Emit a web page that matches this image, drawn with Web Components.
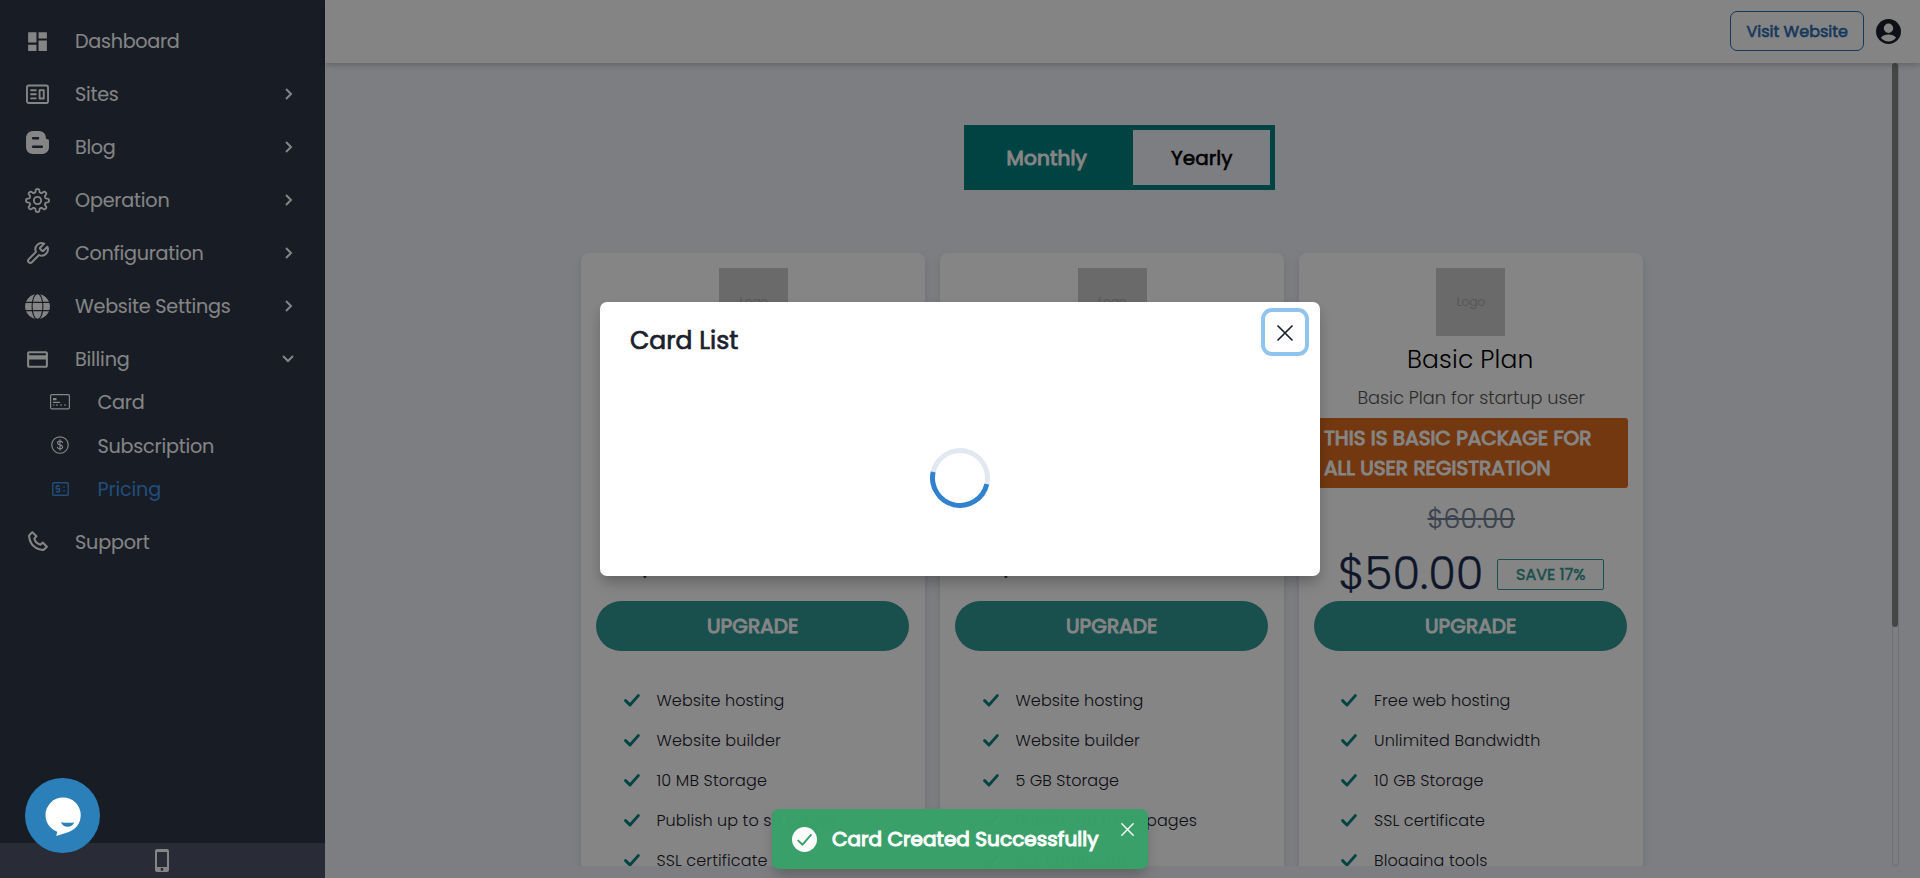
<!DOCTYPE html>
<html lang="en">
<head>
<meta charset="utf-8">
<title>Pricing</title>
<style>
html,body{margin:0;height:100%;overflow:hidden}
body{font-family:Poppins,Inter,"Open Sans",sans-serif;color:#1a202c}
</style>
</head>
<body>
<admin-app></admin-app>
<script>
// Eight-lobed gear outline, sampled around the circle
const gear = (() => {
  const p = [];
  for (let i = 0; i < 160; i++) {
    const t = i / 160 * Math.PI * 2, r = 9.45 + 1.55 * Math.tanh(2 * Math.cos(8 * t)) / Math.tanh(2);
    p.push((12 + r * Math.sin(t)).toFixed(2) + ' ' + (12 - r * Math.cos(t)).toFixed(2));
  }
  return 'M' + p.join('L') + 'Z';
})();
const S = 'fill="none" stroke="currentColor" stroke-linecap="round" stroke-linejoin="round"';
const ICONS = {
  dashboard: ['0 0 24 24', '<path fill="currentColor" d="M3 13h8V3H3v10zm0 8h8v-6H3v6zm10 0h8V11h-8v10zm0-18v6h8V3h-8z"/>'],
  sites: ['0 0 24 24', `<g ${S} stroke-width="1.8"><rect x="1.9" y="3.4" width="20.2" height="16.8" rx="1.8"/><path d="M5.8 7.900h4.6M5.8 11.800h4.6M5.8 15.700h4.6M14 7.800h4v8h-4z"/></g>`],
  blog: ['0 0 24 24', '<path fill="currentColor" fill-rule="evenodd" d="M7.6 1h5.8C17.2 1 20 3.800 20 7.200c0 1 .6 1.700 1.600 1.700 1 0 1.400.6 1.400 1.500v6.200C23 20.300 20.200 23 16.600 23H7.400C3.800 23 1 20.200 1 16.600V7.600C1 3.900 3.900 1 7.600 1zm.2 5.700a1.200 1.200 0 0 0 0 2.400h4.700a1.200 1.200 0 0 0 0-2.400zm0 8.100a1.200 1.200 0 0 0 0 2.400h8.300a1.200 1.200 0 0 0 0-2.400z"/>'],
  gear: ['0 0 24 24', `<g ${S} stroke-width="1.8"><path d="${gear}"/><circle cx="12" cy="12" r="3.5"/></g>`],
  wrench: ['0 0 24 24', `<path ${S} stroke-width="1.9" d="M14.700 6.300a1 1 0 0 0 0 1.400l1.600 1.600a1 1 0 0 0 1.400 0l3.770-3.770a6 6 0 0 1-7.940 7.940l-6.910 6.910a2.120 2.120 0 0 1-3-3l6.910-6.910a6 6 0 0 1 7.940-7.940z"/>`],
  globe: ['0 0 24 24', '<circle cx="12" cy="12" r="11.9" fill="currentColor"/><g fill="none" stroke="#2d3748" stroke-width="1.100"><ellipse cx="12" cy="12" rx="5.200" ry="12.400"/><path d="M0 8h24M0 16h24"/></g>'],
  billing: ['0 0 24 24', '<path fill="currentColor" d="M20 4H4c-1.110 0-1.990.890-1.990 2L2 18c0 1.110.890 2 2 2h16c1.110 0 2-.890 2-2V6c0-1.110-.890-2-2-2zm0 14H4v-6h16v6zm0-10H4V6h16v2z"/>'],
  card: ['0 0 20 16', '<rect x=".6" y=".6" width="18.800" height="14.300" rx="1.200" fill="none" stroke="currentColor" stroke-width="1.200"/><path fill="currentColor" d="M3 4h3.500v2.200H3zM3 7.800h7v1.100H3zM3 10.500h1.500v1H3zM6 10.500h2v1H6zM10 10.500h2v1h-2zM14 10.500h2v1h-2z"/>'],
  dollar: ['0 0 18 18', `<g ${S} stroke-width="1.150"><circle cx="9" cy="9" r="8.200"/><path d="M11.500 6.700c-.2-1-1.200-1.600-2.500-1.600s-2.500.6-2.500 1.800C6.500 9.500 11.600 8.300 11.600 11c0 1.200-1.200 1.900-2.600 1.900S6.500 12.200 6.300 11M9 3.900v10.200"/></g>`],
  pricing: ['0 0 17 14', `<g ${S} stroke-width="1.400"><rect x=".8" y=".8" width="15.400" height="12.400" rx=".8"/><path d="M7.800 4.200H4.200v2.600h3.400v2.700H3.800M5.900 2.700v1.500M5.900 9.500v1.500" stroke-linecap="butt"/><path d="M11.300 5h1.300M11.300 9h1.300" stroke-width="1.200"/></g>`],
  phone: ['0 0 24 24', '<path fill="currentColor" d="M17.707 12.293a.999.999 0 0 0-1.414 0l-1.594 1.594c-.739-.22-2.118-.72-2.992-1.594s-1.374-2.253-1.594-2.992l1.594-1.594a.999.999 0 0 0 0-1.414l-4-4a.999.999 0 0 0-1.414 0L3.581 5.005c-.38.38-.594.902-.586 1.435.023 1.424.4 6.37 4.298 10.268s8.844 4.274 10.269 4.298h.028c.528 0 1.027-.208 1.405-.586l2.712-2.712a.999.999 0 0 0 0-1.414l-4-4.001zm-.127 6.712c-1.248-.021-5.518-.356-8.873-3.712-3.366-3.366-3.692-7.651-3.712-8.874L7 4.414 9.586 7 8.293 8.293a1 1 0 0 0-.272.912c.024.115.611 2.842 2.271 4.502s4.387 2.247 4.502 2.271a.991.991 0 0 0 .912-.271L17 14.414 19.586 17l-2.006 2.005z"/>'],
  right: ['0 0 8 12', '<path fill="none" stroke="currentColor" stroke-width="2" d="M1 1l5 5-5 5"/>'],
  down: ['0 0 12 8', '<path fill="none" stroke="currentColor" stroke-width="2" d="M1 1l5 5 5-5"/>'],
  mobile: ['0 0 14 23', '<path fill="currentColor" fill-rule="evenodd" d="M2 0h10a2 2 0 0 1 2 2v19a2 2 0 0 1-2 2H2a2 2 0 0 1-2-2V2a2 2 0 0 1 2-2zm0 3v15h10V3zm5 15.700a1.500 1.500 0 1 0 0 3 1.500 1.500 0 0 0 0-3z"/>'],
  user: ['0 0 25 25', '<path fill="currentColor" fill-rule="evenodd" d="M12.500 0a12.500 12.500 0 1 0 0 25 12.500 12.500 0 0 0 0-25zm0 4.500a4.700 4.700 0 1 1 0 9.400 4.700 4.700 0 0 1 0-9.400zM4.900 18.800c1.700-2.300 4.700-3.300 7.600-3.300s5.900 1 7.600 3.300c-1.800 2.400-4.600 3.700-7.600 3.700s-5.800-1.300-7.600-3.700z"/>'],
  check: ['0 0 16 13', `<path ${S} stroke-width="2.900" d="M1.600 6.600L6 11 14.300 1.600"/>`],
  close: ['0 0 16 16', '<path fill="none" stroke="currentColor" stroke-width="1.700" stroke-linecap="round" d="M1 1l14 14M15 1L1 15"/>'],
  success: ['0 0 25 25', '<circle cx="12.500" cy="12.500" r="12.500" fill="currentColor"/><path fill="none" stroke="#38a169" stroke-width="1.900" stroke-linecap="round" stroke-linejoin="round" d="M6.300 13.600l4.200 4.100L19 7.900"/>'],
  chat: ['0 0 36 40', '<path fill="#fff" d="M18 .5a17.600 17.600 0 0 1 17.700 17.600c0 8.400-4.500 14-12 17L11.300 39l.9-4.300C5.200 32 .5 26 .5 18A17.600 17.600 0 0 1 18 .5z"/><path fill="#2b80ba" d="M16 25.200q6 1.200 13.200.2c-1.400 3-3.600 4.300-6.600 4.300s-5.300-1.500-6.600-4.500z"/>']
};

const define = (name, html, ready) => customElements.define(name, class extends HTMLElement {
  connectedCallback() {
    if (this.shadowRoot) return;
    const a = (k, d = '') => this.getAttribute(k) ?? d;
    const t = document.createElement('template');
    t.innerHTML = html(a, this);
    this.attachShadow({ mode: 'open' }).append(t.content.cloneNode(true));
    if (ready) ready(this, a);
  }
});

define('app-icon', a => `<style>:host{display:block;flex:none;width:${a('w')}px;height:${a('h', a('w'))}px}svg{display:block;width:100%;height:100%}</style>
<svg viewBox="${ICONS[a('name')][0]}">${ICONS[a('name')][1]}</svg>`);

// A single line of text whose tracking is spread over the measure given by "w";
// "bold" thickens the regular face with a thin outline
define('text-line', a => `<style>:host{display:block;flex:none;width:${a('w')}px;white-space:nowrap}span{display:inline-block;text-decoration:inherit}
:host([bold]){-webkit-text-stroke:${a('bold', 0)}px currentColor}</style><span>${a('t')}</span>`,
  (el, a) => {
    const s = el.shadowRoot.querySelector('span');
    s.style.letterSpacing = ((+a('w') + .5 - s.getBoundingClientRect().width) / a('t').length) + 'px';
  });

define('nav-item', a => `<style>
:host{display:flex;align-items:center;height:53px;color:#fff;font-size:19.200px}
.i{width:75px;display:flex;justify-content:center;flex:none}
.i app-icon{margin-bottom:${a('lift', 0)}px}
.g{flex:1}.c{width:24px;margin-right:${a('arrow') == 'down' ? 25 : 24}px;display:flex;justify-content:center}
text-line{padding-top:1px}
</style><div class="i"><app-icon name="${a('icon')}" w="25"></app-icon></div><text-line t="${a('label')}" w="${a('w')}"></text-line><div class="g"></div>
${a('arrow') ? `<div class="c"><app-icon name="${a('arrow')}" w="${a('arrow') == 'down' ? 12 : 8}" h="${a('arrow') == 'down' ? 8 : 12}"></app-icon></div>` : ''}`);

define('sub-item', a => `<style>
:host{display:flex;align-items:center;height:43.500px;color:${a('color', '#fff')};font-size:19.200px}
.i{width:75px;padding-left:22.500px;display:flex;justify-content:center;flex:none}
text-line{padding-top:1px}
.i app-icon{margin-bottom:1px}
</style><div class="i"><app-icon name="${a('icon')}" w="${a('iw')}" h="${a('ih')}"></app-icon></div><text-line t="${a('label')}" w="${a('w')}"></text-line>`);

define('side-bar', () => `<style>
:host{display:flex;flex-direction:column;width:325px;background:#2d3748;flex:none}
nav{flex:1;padding-top:14.500px}
.sub{margin-top:-5px;margin-bottom:4px}
footer{height:35px;background:#4f5568;color:#fff;display:flex;align-items:center;justify-content:center}
footer app-icon{margin-right:2px}
</style>
<nav>
<nav-item icon="dashboard" label="Dashboard" w="104"></nav-item>
<nav-item icon="sites" label="Sites" w="43" arrow="right"></nav-item>
<nav-item icon="blog" label="Blog" w="40" arrow="right" lift="9"></nav-item>
<nav-item icon="gear" label="Operation" w="94" arrow="right"></nav-item>
<nav-item icon="wrench" label="Configuration" w="128" arrow="right"></nav-item>
<nav-item icon="globe" label="Website Settings" w="155" arrow="right"></nav-item>
<nav-item icon="billing" label="Billing" w="54" arrow="down"></nav-item>
<div class="sub">
<sub-item icon="card" iw="20" ih="16" label="Card" w="46.500"></sub-item>
<sub-item icon="dollar" iw="18" ih="18" label="Subscription" w="116"></sub-item>
<sub-item icon="pricing" iw="17" ih="14" label="Pricing" w="63" color="#4295e8"></sub-item>
</div>
<nav-item icon="phone" label="Support" w="74"></nav-item>
</nav>
<footer><app-icon name="mobile" w="14" h="23"></app-icon></footer>`);

define('top-bar', () => `<style>
:host{display:flex;height:63px;background:#fdfdfd;box-shadow:0 2px 6px rgba(0,0,0,.22);align-items:center;justify-content:flex-end;position:relative;box-sizing:border-box;padding:0 19px 1px 0;gap:12px}
.b{box-sizing:border-box;width:134px;height:40px;border:1px solid #2b6cb0;border-radius:7px;color:#2b6cb0;display:flex;align-items:center;justify-content:center;font-size:16px}
app-icon{color:#1a202c}
</style><div class="b"><text-line bold=".6" t="Visit Website" w="101"></text-line></div><app-icon name="user" w="25"></app-icon>`);

define('period-toggle', () => `<style>
:host{display:flex;box-sizing:border-box;width:311px;height:65px;border:5px solid teal;font-size:20px;line-height:56px}
.m{width:164px;background:teal;color:#fff;box-sizing:border-box;padding-right:9px}
.y{flex:1;color:#000}
div{display:flex;justify-content:center}
</style><div class="m"><text-line bold="1" t="Monthly" w="80"></text-line></div><div class="y"><text-line bold=".6" t="Yearly" w="61"></text-line></div>`);

define('feature-row', a => `<style>
:host{display:flex;align-items:center;height:40px;font-size:16px;font-weight:300;color:#1a202c}
app-icon{color:teal;margin-right:17px;margin-top:1px}
text-line{padding-top:1px}
</style><app-icon name="check" w="16" h="13"></app-icon><text-line t="${a('t')}" w="${a('w')}"></text-line>`);

define('plan-card', a => `<style>
:host{display:flex;flex-direction:column;align-items:center;box-sizing:border-box;width:344px;height:760px;background:#fff;border-radius:8px;padding:15px 15px 0;box-shadow:0 4px 10px rgba(45,65,100,.15);flex:none}
.logo{width:69px;height:68px;flex:none;margin-left:${a('nudge', 1)}px;background:#ccc;color:#a8a8a8;display:flex;align-items:center;justify-content:center;font-size:12.500px}
.top{height:333px;width:100%;display:flex;flex-direction:column;align-items:center;flex:none}
.btn{width:313px;height:50px;align-self:flex-start;border-radius:25px;background:#319795;color:#fff;font-size:20px;display:flex;align-items:center;justify-content:center;flex:none}
.list{padding:29px 0 0 ${a('inset', 27.5)}px;width:100%;box-sizing:border-box}
</style><div class="top"><div class="logo"><text-line t="Logo" w="28"></text-line></div><slot name="info"></slot></div>
<div class="btn"><text-line bold="1" t="UPGRADE" w="91"></text-line></div><div class="list"><slot></slot></div>`);

define('plan-info', () => `<style>
:host{display:flex;flex-direction:column;align-items:center;width:314px}
.n{font-size:25px;font-weight:300;color:#000;line-height:40px;margin-top:4px;margin-right:2px}
.d{font-size:17.800px;font-weight:300;color:#555;line-height:30px;margin-top:3px}
.o{box-sizing:border-box;width:314px;height:70px;margin-top:5px;padding:5px 10px;background:#dd6b20;border-radius:3px;color:#fff;font-size:20px;line-height:30px}
.s{font-size:26.600px;font-weight:300;color:#718096;line-height:40px;margin-top:11px;text-decoration:line-through;text-decoration-thickness:2px;-webkit-text-stroke:.2px currentColor}
.p{display:flex;align-items:center;gap:15px;margin-top:5px;height:60px}
.v{font-size:44.800px;font-weight:300;color:#1c2b50;line-height:60px;-webkit-text-stroke:.3px currentColor;margin-right:-1px}
.k{box-sizing:border-box;width:107px;height:31px;border:1px solid #319795;border-radius:2px;color:#319795;font-size:16px;display:flex;align-items:center;justify-content:center;margin-top:1px}
</style>
<text-line class="n" t="Basic Plan" w="126"></text-line>
<text-line class="d" t="Basic Plan for startup user" w="227"></text-line>
<div class="o"><text-line bold="1" t="THIS IS BASIC PACKAGE FOR" w="267"></text-line><text-line bold="1" t="ALL USER REGISTRATION" w="226"></text-line></div>
<text-line class="s" t="$60.00" w="87"></text-line>
<div class="p"><text-line class="v" t="$50.00" w="145"></text-line><div class="k"><text-line bold=".5" t="SAVE 17%" w="69"></text-line></div></div>`);

define('plan-price', a => `<style>:host{display:block;width:314px;margin-top:193px;padding-left:${a('inset')}px;box-sizing:border-box;font-size:44.800px;font-weight:300;color:#1c2b50;line-height:60px;-webkit-text-stroke:.5px currentColor}</style><text-line t="$0.00" w="120"></text-line>`);

define('scroll-rail', () => `<style>:host{display:block;box-sizing:border-box;width:7px;height:803px;border:1px solid #d5d6dc;border-top:0;border-radius:4px;position:absolute;right:21px;top:0}
div{width:6px;height:564px;margin-left:-1px;border-radius:3px;background:#868686}</style><div></div>`);

define('modal-card', () => `<style>
:host{display:block;box-sizing:border-box;width:720px;height:274px;background:#fff;border-radius:7px;box-shadow:0 10px 15px -3px rgba(0,0,0,.18),0 4px 10px rgba(0,0,0,.1);padding:10px 15px 0 30px;font-size:25px}
header{display:flex;justify-content:space-between}
header text-line{line-height:57px}
.x{width:40px;height:40px;border-radius:7px;box-shadow:0 0 0 4px #90c4ee;display:flex;align-items:center;justify-content:center;color:#1a202c}
.x app-icon{margin-top:1px}
.s{display:block;box-sizing:border-box;width:60px;height:60px;margin:79px 0 0 300px;border-radius:50%;border:5px solid #3182ce;border-top-color:#e2e8f0;border-right-color:#e2e8f0;transform:rotate(-32.500deg)}
</style><header><text-line bold=".7" t="Card List" w="108"></text-line><div class="x"><app-icon name="close" w="16"></app-icon></div></header><div class="s"></div>`);

define('toast-message', () => `<style>
:host{display:flex;box-sizing:border-box;width:376px;height:60px;padding:0 14px 0 20px;align-items:center;background:#38a169;color:#fff;border-radius:7px;opacity:.98;box-shadow:0 8px 14px -3px rgba(0,0,0,.25)}
text-line{font-size:20px;margin-left:15px}
.c{margin:0 0 20px auto}
</style><app-icon name="success" w="25"></app-icon><text-line bold="1.100" t="Card Created Successfully" w="266"></text-line><app-icon class="c" name="close" w="13"></app-icon>`);

define('chat-button', () => `<style>:host{display:flex;align-items:center;justify-content:center;width:75px;height:75px;border-radius:50%;background:#2b80ba}app-icon{margin:2px 0 0 1px}</style><app-icon name="chat" w="36" h="40"></app-icon>`);

const rows = list => list.map(([t, w]) => `<feature-row t="${t}" w="${w}"></feature-row>`).join('');
define('admin-app', () => `<style>
:host{display:flex;height:878px;width:1920px;position:relative;overflow:hidden;background:#f0f2f8}
.main{flex:1;display:flex;flex-direction:column;isolation:isolate}
.body{height:803px;position:relative;overflow:hidden;display:flex;flex-direction:column;align-items:center}
top-bar{z-index:1}
period-toggle{margin-top:62px;margin-left:-6px}
.cards{display:flex;gap:15px;margin-top:63px;margin-left:-21px}
.shade{position:absolute;inset:0;background:rgba(0,0,0,.48)}
modal-card{position:absolute;left:600px;top:302px}
toast-message{position:absolute;left:772px;top:809px}
chat-button{position:absolute;left:25px;top:778px}
</style>
<side-bar></side-bar>
<div class="main"><top-bar></top-bar><div class="body">
<period-toggle></period-toggle>
<div class="cards">
<plan-card><plan-price slot="info" inset="36"></plan-price>${rows([['Website hosting', 127.5], ['Website builder', 124], ['10 MB Storage', 110], ['Publish up to six pages', 181], ['SSL certificate', 110.5]])}</plan-card>
<plan-card nudge="0"><plan-price slot="info" inset="38"></plan-price>${rows([['Website hosting', 127.5], ['Website builder', 124], ['5 GB Storage', 103], ['Publish up to six pages', 181], ['SSL certificate', 110.5]])}</plan-card>
<plan-card nudge="-1" inset="27"><plan-info slot="info"></plan-info>${rows([['Free web hosting', 136], ['Unlimited Bandwidth', 166], ['10 GB Storage', 109], ['SSL certificate', 110.5], ['Blogging tools', 113]])}</plan-card>
</div><scroll-rail></scroll-rail></div></div>
<div class="shade"></div>
<modal-card></modal-card><toast-message></toast-message><chat-button></chat-button>`);
</script>
</body>
</html>
